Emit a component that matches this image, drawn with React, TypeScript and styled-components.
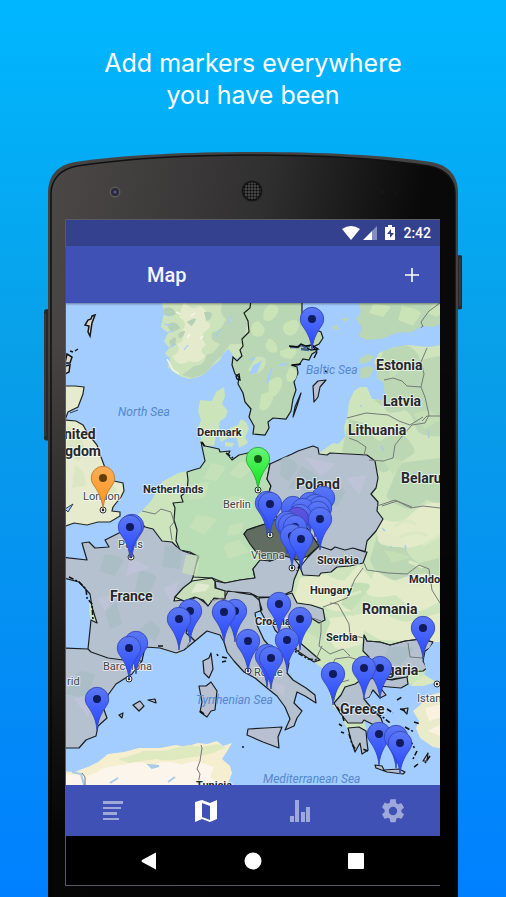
import React from 'react';
import styled, { createGlobalStyle } from 'styled-components';

const GlobalStyle = createGlobalStyle`
  * { box-sizing: border-box; }
  body { margin: 0; background: #0080ff; }
`;

const Page = styled.main`
  min-height: 100vh;
  display: flex;
  flex-direction: column;
  align-items: center;
  overflow: hidden;
  background: linear-gradient(#00b7ff 0%, #089fe8 40%, #0080ff 100%);
`;

const Headline = styled.h1`
  margin: 47px 16px 41px;
  color: #fff;
  font: 400 25px/32px Inter, sans-serif;
  text-align: center;
  max-width: 320px;
`;

const Phone = styled.section`
  position: relative;
  width: calc(100% - 84px);
  max-width: 422px;
  padding: 67px 24px 12px 23px;
`;

const Shell = styled.svg`
  position: absolute;
  inset: 0;
  width: 100%;
  height: 100%;
`;

const Screen = styled.div`
  position: relative;
  display: flex;
  flex-direction: column;
  border: solid #5a5a66;
  border-width: 1px 0 1px 1px;
  background: #000;
  font-family: Roboto, sans-serif;
`;

const StatusBar = styled.div`
  height: 26px;
  padding-right: 9px;
  display: flex;
  align-items: center;
  justify-content: flex-end;
  background: #34418f;
  color: #fff;
`;

const StatusIcons = styled.svg`
  width: 54px;
  height: 16px;
  margin-right: 7px;
`;

const Clock = styled.time`
  font-size: 14px;
  line-height: 20px;
  font-weight: 500;
`;

const AppBar = styled.header`
  position: relative;
  height: 57px;
  padding: 0 16px 0 81px;
  display: flex;
  align-items: center;
  justify-content: space-between;
  background: #3f51b5;
  box-shadow: 0 1px 2px rgba(0, 0, 0, 0.4);
`;

const Title = styled.h2`
  margin: 0;
  color: #f4f5ff;
  font-size: 20px;
  line-height: 24px;
  font-weight: 500;
`;

const IconButton = styled.button`
  display: grid;
  place-items: center;
  width: 24px;
  height: 24px;
  padding: 0;
  border: 0;
  background: none;
  color: #fff;
`;

const MapDrawing = styled.svg`
  display: block;
  width: 100%;
  height: auto;
`;

const TabBar = styled.nav`
  height: 51px;
  display: grid;
  grid-template-columns: repeat(4, 1fr);
  background: #3f51b5;
`;

const Tab = styled.button<{ $active?: boolean }>`
  display: grid;
  place-items: center;
  padding: 0;
  border: 0;
  background: none;
  color: ${(p) => (p.$active ? '#fff' : '#9fa8da')};
`;

const SystemBar = styled.div`
  height: 49px;
  display: flex;
  align-items: center;
  justify-content: space-between;
  padding: 0 72px 0 71px;
`;

const PhoneShell = () => (
  <Shell viewBox="42 152 422 745" preserveAspectRatio="none" aria-hidden="true">
    <defs>
      <linearGradient id="face" x1="0" y1="0" x2="1" y2=".32">
        <stop offset="0" stopColor="#4c4848" />
        <stop offset=".5" stopColor="#302f2f" />
        <stop offset=".85" stopColor="#090909" />
      </linearGradient>
      <linearGradient id="fade" x1="0" y1="0" x2="0" y2="1">
        <stop offset=".25" stopColor="#000" stopOpacity="0" />
        <stop offset=".9" stopColor="#000" stopOpacity=".9" />
      </linearGradient>
      <pattern id="mesh" width="3" height="3" patternUnits="userSpaceOnUse">
        <circle cx="1.5" cy="1.5" r="1.1" fill="#050505" />
      </pattern>
    </defs>
    <path d="M49 309h-3q-2 0-2 3v125q0 3 2 3h3zM457 255h4q1 0 1 2v50q0 2-1 2h-4z" fill="#272727" />
    <path d="M45 313v123M460 258v48" stroke="#484848" />
    <path d="M48 910V193C48 175 58 165 75 162C122 155 186 152 253 152C320 152 384 155 431 162C448 165 458 175 458 193V910Z" fill="#444343" />
    <path d="M51 910V194C51 179 61 169 77 166C123 159 187 155 253 155C319 155 383 159 429 166C445 169 455 179 455 194V910Z" fill="url(#face)" stroke="#111" strokeWidth="1.5" />
    <path d="M48 910V193C48 175 58 165 75 162C122 155 186 152 253 152C320 152 384 155 431 162C448 165 458 175 458 193V910Z" fill="url(#fade)" />
    <circle cx="115" cy="192" r="5.5" fill="#5c5959" />
    <circle cx="115" cy="192" r="4" fill="#2b2a36" />
    <circle cx="115" cy="192" r="1.5" fill="#5555a0" />
    <circle cx="252" cy="191" r="10.5" fill="#171717" />
    <circle cx="252" cy="191" r="8.5" fill="#4c4b4b" />
    <circle cx="252" cy="191" r="9" fill="url(#mesh)" />
    <circle cx="383" cy="192" r="1" fill="#1c1c1c" /><circle cx="396" cy="192" r="1.5" fill="#151515" />
  </Shell>
);

type PinData = { x: number; y: number; c?: 'blue' | 'green' | 'orange' | 'violet'; dot?: boolean };

const pins: PinData[] = [
  { x: 312, y: 349 }, { x: 103, y: 508, c: 'orange' }, { x: 258, y: 489, c: 'green' },
  { x: 132, y: 556, dot: false }, { x: 130, y: 557 },
  { x: 267, y: 533, dot: false }, { x: 270, y: 534 },
  { x: 323, y: 528, dot: false }, { x: 310, y: 534, dot: false }, { x: 315, y: 536, dot: false },
  { x: 320, y: 538, dot: false }, { x: 293, y: 538, dot: false }, { x: 303, y: 540, dot: false },
  { x: 318, y: 543, dot: false }, { x: 300, y: 546, dot: false }, { x: 297, y: 549, c: 'violet', dot: false },
  { x: 287, y: 553, dot: false }, { x: 290, y: 555, dot: false }, { x: 295, y: 557 },
  { x: 320, y: 549 }, { x: 292, y: 566 }, { x: 301, y: 569 },
  { x: 190, y: 641 }, { x: 179, y: 649 }, { x: 235, y: 641 }, { x: 224, y: 642 },
  { x: 279, y: 634 }, { x: 300, y: 649 },
  { x: 136, y: 673, dot: false }, { x: 129, y: 678 }, { x: 97, y: 729 },
  { x: 248, y: 671 }, { x: 287, y: 670 }, { x: 267, y: 686, dot: false }, { x: 271, y: 688 },
  { x: 333, y: 704 }, { x: 380, y: 698 }, { x: 364, y: 698 }, { x: 423, y: 658 },
  { x: 379, y: 764 }, { x: 396, y: 767, dot: false }, { x: 400, y: 773 },
];

const pinStroke = { blue: '#3448b8', green: '#28a53c', orange: '#ba7a35', violet: '#4038ae' };
const pinDot = { blue: '#101b5d', green: '#125d15', orange: '#633d0c', violet: '#101b5d' };

const Pin = ({ x, y, c = 'blue', dot = true }: PinData) => (
  <g transform={`translate(${x} ${y})`}>
    <path d="M0 1C-1-9-4-15-8-21C-10-24-11.7-26-11.7-30A11.7 11.7 0 0 1 11.7-30C11.7-26 10-24 8-21C4-15 1-9 0 1Z" fill={`url(#pin-${c})`} stroke={pinStroke[c]} strokeWidth=".9" />
    {dot && <circle cy="-30" r="4" fill={pinDot[c]} />}
  </g>
);

type LabelData = { t: string; x: number; y: number; s: number; k?: 'city' | 'sea' };

const labels: LabelData[] = [
  { t: 'Estonia', x: 376, y: 370, s: 14 }, { t: 'Latvia', x: 383, y: 406, s: 14 },
  { t: 'Lithuania', x: 348, y: 435, s: 14 }, { t: 'Denmark', x: 197, y: 436, s: 11 },
  { t: 'nited', x: 64, y: 439, s: 14 }, { t: 'gdom', x: 65, y: 456, s: 14 },
  { t: 'Netherlands', x: 143, y: 493, s: 11 }, { t: 'Poland', x: 296, y: 489, s: 14 },
  { t: 'Belaru', x: 401, y: 483, s: 14 }, { t: 'France', x: 110, y: 601, s: 14 },
  { t: 'Slovakia', x: 317, y: 564, s: 11 }, { t: 'Hungary', x: 310, y: 594, s: 11 },
  { t: 'Moldo', x: 409, y: 583, s: 11 }, { t: 'Romania', x: 362, y: 614, s: 14 },
  { t: 'Croatia', x: 255, y: 625, s: 11 }, { t: 'Serbia', x: 326, y: 641, s: 11 },
  { t: 'Bulgaria', x: 366, y: 675, s: 14 }, { t: 'Greece', x: 340, y: 714, s: 14 },
  { t: 'Tunisia', x: 196, y: 789, s: 11 },
  { t: 'London', x: 83, y: 500, s: 11, k: 'city' }, { t: 'Paris', x: 118, y: 548, s: 11, k: 'city' },
  { t: 'Berlin', x: 223, y: 508, s: 11, k: 'city' }, { t: 'Vienna', x: 251, y: 559, s: 11, k: 'city' },
  { t: 'Barcelona', x: 103, y: 670, s: 11, k: 'city' }, { t: 'rid', x: 67, y: 685, s: 11, k: 'city' },
  { t: 'Rome', x: 254, y: 676, s: 11, k: 'city' }, { t: 'Istan', x: 417, y: 702, s: 11, k: 'city' },
  { t: 'North Sea', x: 118, y: 416, s: 12, k: 'sea' }, { t: 'Baltic Sea', x: 306, y: 374, s: 12, k: 'sea' },
  { t: 'Tyrrhenian Sea', x: 196, y: 704, s: 12, k: 'sea' },
  { t: 'Mediterranean Sea', x: 263, y: 783, s: 12, k: 'sea' },
];

const MapLabel = styled.text<{ $kind: 'country' | 'city' | 'sea' }>`
  font-family: Roboto, sans-serif;
  font-weight: ${(p) => (p.$kind === 'country' ? 700 : 400)};
  font-style: ${(p) => (p.$kind === 'sea' ? 'italic' : 'normal')};
  fill: ${(p) => (p.$kind === 'country' ? '#25282b' : p.$kind === 'city' ? '#41464b' : '#5488cc')};
  stroke: ${(p) => (p.$kind === 'sea' ? 'none' : 'rgba(255, 255, 255, 0.65)')};
  stroke-width: 2px;
  stroke-linejoin: round;
  paint-order: stroke;
`;

const cityMarks = [[103, 510], [131, 557], [270, 535], [258, 490], [292, 568], [248, 671], [129, 679], [437, 684]];

const EuropeMap = () => (
  <MapDrawing viewBox="66 303 374 482" role="img" aria-label="Map of Europe with markers">
    <defs>
      <linearGradient id="pin-blue" x1="0" y1="0" x2="0" y2="1"><stop stopColor="#5b78f4" /><stop offset="1" stopColor="#2544ff" /></linearGradient>
      <linearGradient id="pin-green" x1="0" y1="0" x2="0" y2="1"><stop stopColor="#68f577" /><stop offset="1" stopColor="#08e512" /></linearGradient>
      <linearGradient id="pin-orange" x1="0" y1="0" x2="0" y2="1"><stop stopColor="#f9ae57" /><stop offset="1" stopColor="#ff9418" /></linearGradient>
      <linearGradient id="pin-violet" x1="0" y1="0" x2="0" y2="1"><stop stopColor="#5f55dc" /><stop offset="1" stopColor="#3c3ae6" /></linearGradient>
      <clipPath id="mainland-clip"><use href="#mainland" /></clipPath>
      <clipPath id="grey-clip"><use href="#visited" /></clipPath>
    </defs>
    <rect x="60" y="300" width="390" height="490" fill="#a3ccff" />

    {/* Scandinavia */}
    <path d="M161 300L164 312L161 327L168 333L164 341L169 348L165 354L170 358L168 367L175 373L182 377L190 379L198 377L205 374L211 367L219 361L223 354L228 349L232 353L234 361L260 340V300Z" fill="#cde3bc" />
    <path d="M184 300Q190 312 200 306Q213 313 205 321Q215 324 206 331Q199 336 206 345Q197 351 206 356Q198 365 189 361Q179 369 172 356Q182 352 177 344Q187 340 181 331Q190 324 179 317Z" fill="#e4ebcd" />
    <path d="M224 300Q217 312 226 319Q221 332 213 332Q208 340 220 344Q215 354 206 355Q205 366 194 366L182 375L192 378L205 374L214 363L223 354L230 344L243 344L252 300Z" fill="#b9d5b5" />
    <path d="M163 309q9-5 13 5q-8 5-12-1zm4 16q8-6 13 3q-8 6-11 1zm2 17q5-6 7-4q0 8-4 9zm18-20q7-5 9-3q-3 7-5 7zm-9 12q5-4 7-3q-1 7-6 7zm26-22q8-1 8 3q-2 7-6 5z" fill="#b4d0b5" />
    <path d="M162 314l8 2M164 324l8 1M165 333l9-2M168 348l8-4M184 350l4-5M216 337l4-8M228 324l4-9" stroke="#a3ccff" strokeWidth="1.2" />
    <path d="M167 359l6 11 6 4M176 312l4 2M191 316l4-3M187 338l3-4M200 339l3-3" fill="none" stroke="#f5f5ec" strokeWidth="1.5" />
    <path d="M251 300L250 308L244 313L248 321L249 332L242 339L243 346L240 350L242 356L237 361L233 357L232 365L235 374L239 377L238 384L243 393L245 402L251 409L249 417L254 426L253 434L265 435L269 428L268 422L273 418L286 419L291 411L293 399L296 390L294 382L298 373L297 367L291 365L299 365L303 359L309 360L312 354L317 351L313 347L319 344L323 338L321 332L314 329L308 324L302 320V300Z" fill="#b9d6b5" stroke="#191d1a" strokeWidth="1.2" />
    <path d="M270 304q12 1 7 10q-6 10-13 6q-3-10 6-16zm-12 17q11 8 4 15q-10 3-11-6q0-8 7-9zm27 2q13-8 14 3q-3 12-12 9q-7-5-2-12zm-16 15q10 5 8 14q-9 3-12-7zm-13 19q14-2 8 11q-7 10-16 2zm36-10q10 3-1 12q-13-1-11-8zm-23 34q15-10 13 5q-6 14-14 11zm21-14q11 3 5 13q-9 5-9-5zm-29 28q12-8 12 5q-8 16-14 8z" fill="#cae3b7" />
    <path d="M251 373l3-7 6-3-4 9zm16 10l5-15M279 365l8-1M250 360l5-2" stroke="#a3ccff" strokeWidth="2" fill="#a3ccff" />
    <path d="M290 347h8l3-2 4 2 5-1M301 349l8 1" fill="none" stroke="#40618a" strokeWidth="2.5" />
    <path d="M289 346l9 1 3-3 5 2 6-1 6 4-7 1-4-2M317 352l-3 6M292 365l9-1M236 376l3-2 1 6-3-1z" fill="none" stroke="#080a0d" strokeWidth="1.3" />

    {/* British Isles */}
    <path d="M60 386H75L84 387L83 394L78 407L68 412L65 420L76 421L83 425L88 434L97 445L101 457L104 465L108 477L114 481L123 483L124 491L121 497L113 507L112 511L120 512V516L110 522L98 522L87 525L74 523L66 526L60 525Z" fill="#e5ebcc" stroke="#242722" strokeWidth="1.2" />
    <path d="M67 426q18 8 17 28l-6 8-9-11zm8 39q13 8 10 21l-13 2zm36 20q9 3 4 12l-7-3z" fill="#d7e4bd" opacity=".7" />
    <path d="M65 509l8-5-5 8zM70 413l8-3" fill="#a3ccff" stroke="#30404e" />
    <path d="M92 316l3-1-3 8-2 13-2-4 1-6-4-1 3-5 3-1zM67 354l5 3-2 6h-5zM70 351l3 1m2-1l3-2M65 366l5-1-1 7-4 2" fill="#d9d6c7" stroke="#151515" strokeWidth="1.5" />

    {/* Denmark */}
    <path d="M200 445L201 438L198 428L201 420L198 411L200 400L212 401L216 392L224 387L225 396L222 404L228 411L225 418L220 421L219 429L216 436L214 446ZM230 428L238 425L241 419L246 422L249 429L245 437L248 443L239 448L237 438L229 438ZM218 433l7-2 3 7-7 4zM225 442l9 1-2 4-7-1z" fill="#cbe4b9" />

    {/* Mainland */}
    <path id="mainland" d="M201 442L207 445L210 447L219 449L220 452L230 451L228 455L232 460L236 458L239 455L248 453L258 462L270 464L283 458L293 454L298 451L313 446L317 448L319 453L333 443L338 444L345 437L344 426L347 418L349 402L354 391L360 387L367 387L372 399L382 400L385 394L384 383L377 378L378 369L374 362L379 353L391 348L408 345L428 347L450 344V650L433 642L430 648L425 651L423 661L427 668L424 674L434 682L424 686L408 684L401 688L389 687L379 686L386 695L380 698L373 690L370 689L369 697L364 699L373 710L381 718L384 727L376 726L364 720L367 732L368 750L362 754L360 743L355 750L350 741L347 729L340 713L332 705L329 693L330 680L325 670L314 662L302 656L290 646L281 639L275 630L272 623L266 621L261 612L255 613L257 625L264 640L273 650L284 656L289 663L287 673L293 680L306 688L315 695L316 703L305 696L297 692L294 703L302 711L297 718L294 726L285 730L290 719L285 707L277 696L267 688L255 678L244 672L234 661L227 652L224 642L220 635L207 631L195 641L184 650L176 654L160 648L145 647L142 661L132 674L116 684L108 695L103 707L107 717L98 726L96 736L86 740L79 748L60 747V648L88 649L91 620L89 610L90 594L85 589L79 582L60 577V557L87 560L82 543L89 542L95 548L109 547L105 540L121 532L136 517L151 501L162 482L178 473L193 470L200 468L205 460Z" fill="#cde4bd" />
    <g clipPath="url(#mainland-clip)">
      <path d="M385 345q30-5 35 15l20-4v80q-20 2-24-8q-5-16-11-18q-19 6-19-1q-18-12-14-17l5-19zM349 419l18 5q5 15 13 17q18-12 25-5q14 15 8 18l-27 18q-10 2-14-12l-30-8zM400 463l40-5v50q-15-12-15-6q-16 10-23 5q-18-8-15-13zM379 530q20 5 25 13q4 16 15 20l20-5v18q-15 12-21 11q-17-2-27-6q-19-10-21-22z" fill="#b8d5b3" opacity=".85" />
      <path d="M375 515q15 10 30 5q18-20 35-17v34q-30 14-40 10q-18 0-22-6zM300 578l26-4q14 8 19 6l13-15q14 12 13 16l-18 30q-20 2-28-4l-32-5zM375 570q18 12 22 10q24-10 42-4v26q-20 12-26 9q-14-14-18-16q-26 6-29-4zM319 620l31-5q16 6 15 9l-3 20q-22 8-28 3zM354 615l28-3q20 12 27 9l31-8v30l-60-3-20-12z" fill="#e6ebca" opacity=".9" />
      <path d="M343 470l-10 20 25 4zM382 458q22 0 20 5l-9 12zM390 365q12 4 8 8l-9 7zM413 414q20-9 27 6l-15 9zM352 583q20-1 18 4l-18 24q-14-6-10-9zM368 643l20 5-14 10zM320 610q12 10 10 14l-8 17-16-10zM384 550q26 4 25 8l-17 5z" fill="#c4dfb5" />
      <path d="M395 526q12-9 20-2M401 537q12-7 25-2M423 545l17-10M410 562l12 5M347 596l13-4" fill="none" stroke="#dbe8c4" strokeWidth="3" strokeLinecap="round" />
      <path d="M382 528l3 3M390 546l2 2M405 545l1 4M413 474l4-2M428 430l1 8M381 446l3 5M360 406h2M411 606l3 1" stroke="#a9cbe8" strokeWidth="1.5" />
    </g>

    <path d="M60 771L75 772L82 769L88 767L98 762L108 754L124 752L139 748L160 748L176 745L185 747L198 743L207 744L217 741L223 746L232 743L226 753L222 759L230 766L232 773L227 786H60Z" fill="#f6efcf" />
    <path d="M118 759q20-5 25-8q25 0 25-1l20-5 15 2 14-3 9 3-13 6-12 3-15 2q-20 4-30 1-21 3-27 4z" fill="#dfe9bf" />
    <path d="M60 786v-12l23 1q10 2 18-6 15-4 23-4 15-6 28 1 12-8 30-1 10-6 20-2l12 4q-5 10-2 12l12 5 3 6z" fill="#fcf5ec" />
    <path d="M110 783l8-5m31-13l10 1-7 2zm19 17l7-5M72 772l9 2 3 11" stroke="#a9cbe8" strokeWidth="2" fill="none" />
    <path d="M201 745l1 3-2 13-3 8 3 5-2 10M82 773l3 4v9" fill="none" stroke="#777" />

    {/* Visited countries */}
    <g stroke="#191e23" strokeWidth="1.2" strokeLinejoin="round">
      <path d="M201 442L205 446L210 447L219 449L220 452L230 451L228 455L232 460L239 455L248 453L258 461L270 464L267 479L271 486L268 495L274 508L277 519L265 524L247 530L244 534L252 543L260 553L260 561L253 569L255 578L240 580L225 583L212 578L193 577L195 567L199 557L190 552L180 550L176 541L177 530L174 520L175 508L173 503L183 502L181 496L187 491L188 480L187 472L193 470L200 468L205 461Z" fill="#b9ddb4" />
      <path id="visited" d="M270 464L283 458L292 454L298 451L313 446L318 448L319 454L327 455L330 453L367 455L375 461L378 478L376 488L371 494L378 502L377 511L383 519L376 531L367 541L365 552L353 548L345 550L335 547L331 550L319 546L305 525L277 519L268 495L271 486L267 479ZM136 517L145 527L153 529L162 541L172 542L180 550L198 556L193 577L190 585L175 597L174 601L183 600L186 608L181 615L189 623L186 633L195 641L184 650L176 653L160 648L145 647L142 661L123 660L108 658L91 652L88 649L91 620L97 623L92 607L90 594L79 582L60 577V557L87 560L82 543L89 542L95 548L109 547L105 540L121 532ZM60 648L88 649L91 652L108 658L123 660L142 661L132 674L116 684L108 695L103 707L107 718L98 726L96 736L86 740L79 748H60ZM189 620L184 611L188 601L197 597L208 605L214 598L224 599L228 591L253 595L259 600L262 610L255 613L257 625L264 640L273 650L284 656L289 663L287 673L293 680L306 688L315 695L316 703L305 696L297 692L294 703L302 711L297 718L294 726L285 730L290 719L285 707L277 696L267 688L255 678L244 672L234 661L227 652L224 642L220 635L207 631L195 641L189 635ZM225 583L240 580L255 578L253 569L260 560L270 561L281 557L292 556L300 566L297 573L294 580L292 591L279 597L258 597L250 593L237 592L225 591L216 588L215 581ZM319 546L331 550L335 547L345 550L353 548L367 552L363 563L350 566L337 567L331 572L321 573L319 576L303 575L300 567L308 557ZM259 598L279 597L292 593L297 603L311 605L323 609L325 620L319 623L311 618L292 617L287 623L298 641L320 660L314 662L290 646L275 630L272 623L266 621L261 612ZM364 635L367 641L380 642L390 645L405 641L421 639L433 642L430 648L425 651L423 661L427 668L423 671L410 672L407 677L392 679L377 678L370 674L367 665L369 657L363 651ZM345 687L355 684L361 680L377 678L392 680L407 677L408 684L401 688L389 687L379 686L386 695L380 698L373 690L369 697L364 699L373 710L381 718L384 727L376 726L364 720L362 723L348 723L340 713L334 703L341 695ZM348 728L359 727L366 731L367 742L368 750L362 754L360 743L355 752L351 740Z" fill="#b5c1cf" />
      <path d="M203 661L209 658L211 653L213 669L209 678L204 673ZM199 686L206 686L211 682L217 691L215 710L211 711L207 717L200 712L202 702ZM248 729L265 728L282 727L278 737L279 748L263 742L247 735ZM133 705L140 701L144 706L139 711ZM148 700l7-1 1 4zM119 715l4-2-1 5zM375 765l7 1 2 4 15-1 6 3-2 2-16-2-11-4zM313 386L318 381L326 380L320 387L318 397L314 402ZM301 393L297 406L293 417L295 407ZM423 761l5-8-1 8zM402 709l6-1-1 6z" fill="#b8c0d2" />
      <path d="M247 530L265 524L277 519L290 521L305 525L319 546L308 556L298 560L285 556L270 561L257 553L250 544L244 534Z" fill="#626d61" />
      <path d="M192 581L212 578L215 581V588L225 591V599L214 598L208 606L203 600L195 597L184 601L175 597L183 588Z" fill="#c8dfb9" />
    </g>

    {/* Terrain */}
    <g clipPath="url(#grey-clip)">
      <path d="M105 554q20 3 18 8l-9 14-15-5zm34 16q19 4 17 9l-8 16-14 2zm26-25q19 2 17 7l-2 17-18-2zm-60 66q14-11 12-9l5 22-12 5zm45 9q12 8 10 11l-5 10-19-8zm152-154q18 10 16 14l-11 11-19-3zm27 18q18 4 16 8l-7 14-20-4zm-47-30q18 9 16 13l-9 15-9-7zM79 671q18 2 16 5l-9 22-21-4zm309-24q27-1 25 3l-12 15-17-4zM223 611q18 4 16 8l-2 19-14-9z" fill="#a9bdc6" opacity=".8" />
      <path d="M130 557l20 11-24 8zM97 598l21-5-13 18zM163 588l16-7-7 22zM74 699l23-8-9 26zM304 457l32 7-15 12zM346 478l21-3-8 20zM362 684l10 10-7 7zM269 681l17 5-3 11zM238 645l13 8-3 11z" fill="#c0c3d8" opacity=".8" />
    </g>
    <g fill="#cbe3ba" opacity=".7">
      <path d="M211 463q16 2 14 6l-8 12-14-2zm30-2q14 4 12 8l-12 10-12-5zm-49 24q19-5 17-2l-4 15-16 2zm38 11q17 0 15 3l-8 11-15-2zm-33 19q21 2 19 6l-12 14-15-8zm26 31q19-9 17-6l9 12-20 7zm-37 9q16-1 14 3l-3 18-15-3zm43-29q17-6 15-3l-4 11-14 2z" />
      <path d="M197 583l13 2-4 6-15 2z" fill="#eef0dc" />
    </g>

    {/* Unvisited borders */}
    <g fill="none" stroke="#747c77" strokeWidth="1">
      <path d="M142 511l13 3 6-5 10 3 3 10-4 5 2 13M384 380l9-2 9 3 5 5 14 1 3-13-3-12 6-14M347 418l19-5 22 2 11 6 11 4 13-8M421 387l4 10 4 18-4 8-13 2-9 10-8 10-2 13-10 3-14-1M349 438l8 3 9 6-2 8M377 506l18-6 16 8 12-2 17 2M364 563l3 7 21 3 19 1 12-9 10 4 3 21 8 13M363 568l-8 11-8 19-13 5-11 4M330 603l8 1 11 20 1 11 14 3M292 617l15-1 14 5 0 11-2 14 11 8 13-5 7 7M316 659l6-13M330 671l5-12 14-2 12 4 8 0M334 700l4-17 11-3M421 328l19-23M422 421l5-5h13M408 643l2 14 13 1" />
      <path d="M186 648l6-10M210 601l13-3M382 506l15-5 15 6" />
    </g>
    <path d="M364 635l3 6 13 1 10 3 15-4 16-2 12 3" fill="none" stroke="#24292a" strokeWidth="1.2" />

    {/* Finland, islands and Anatolia */}
    <path d="M358 300l3 12-5 7 6 8-3 9 7 4 16-1 14-6 16-1 10-6 11 1 12-5v-22zM359 359l9-5 7 3-6 5-8 2zM360 369l8-3 6 2-4 9-9 2zM330 328l7-3 2 5zM341 319l8-2-3 5z" fill="#b9d6b5" />
    <path d="M373 304q19 1 17 4l-7 9-14-4zm29 2q21 4 19 8l-8 12-15-6zm32-3q13 3 11 6l-8 8-10-4z" fill="#cae3b7" />
    <path d="M423 327l-2-5 8-11 11-8" fill="none" stroke="#717c73" />
    <path d="M413 711L420 705L429 695L445 691V749L433 747L420 738L416 728L419 721Z" fill="#eaebca" />
    <path d="M425 708l18-4v13l-14 4zM428 731l15-8v14z" fill="#faf1df" />
    <path d="M411 685l12 1 7-4 16-1v10l-16 4-10 5-8-6zM434 642h12v39l-12 1-7-8-3-13 3-10z" fill="#a3ccff" />
    <path d="M424 675l13 7-14 4-13 0z" fill="#dae7bf" />

    {/* Rugged coast and islets */}
    <g fill="none" stroke="#101418" strokeWidth="1.6" strokeDasharray="5 2 2 2">
      <path d="M281 640l10 9 17 10 9 1M284 634l6 10 9 7M69 577l10 5 7 7 1 9 5 6 1 16M202 442l3 5M226 453l7 5M337 707l5 7 2 7M349 734l3 10 4 6M368 751l-5-2M387 709l6 4M397 700l5-3M410 740l5 9M417 751l-4 8M300 564l-3 7M400 709l7 2M414 722l6 2M405 727l9 5M384 735l-7 3" />
      <path d="M217 654l1 2M222 657l5 1M222 662l4-1M341 732l3 1M339 724l3 2M377 713l7 5 6 5M242 747l2 0M430 756l-5 7M418 764l-5 4M158 646l6 0M200 711l4 3M325 371l2 1" />
    </g>

    {labels.map(({ t, x, y, s, k = 'country' }) => (
      <MapLabel key={t} x={x} y={y} fontSize={s} $kind={k}>{t}</MapLabel>
    ))}
    {cityMarks.map(([x, y]) => (
      <g key={x}><circle cx={x} cy={y} r="3" fill="#eee" stroke="#333" /><circle cx={x} cy={y} r="1.2" fill="#222" /></g>
    ))}
    {pins.map((p) => <Pin key={`${p.x}-${p.y}`} {...p} />)}
  </MapDrawing>
);

export default function App() {
  return (
    <>
      <GlobalStyle />
      <Page>
        <Headline>Add markers everywhere you have been</Headline>
        <Phone>
          <PhoneShell />
          <Screen>
            <StatusBar>
              <StatusIcons viewBox="0 0 54 16" fill="currentColor" aria-hidden="true">
                <path d="M0 4Q9-2 18 4L9 15ZM30 6v9H21z" />
                <path d="M35 1v14h-5V6z" opacity=".4" />
                <path d="M46 0h4v2h3v13H43V2h3zM49 4l-4 5h3v4l4-5h-3z" fillRule="evenodd" />
              </StatusIcons>
              <Clock>2:42</Clock>
            </StatusBar>
            <AppBar>
              <Title>Map</Title>
              <IconButton type="button" aria-label="Add marker">
                <svg width="16" height="16" viewBox="0 0 16 16" stroke="currentColor" strokeWidth="1.6"><path d="M8 1v14M1 8h14" /></svg>
              </IconButton>
            </AppBar>
            <EuropeMap />
            <TabBar aria-label="Sections">
              <Tab type="button" aria-label="List">
                <svg width="22" height="22" viewBox="0 0 22 22" fill="currentColor"><path d="M1 1h20v3H1zM1 7h18v2H1zM1 12h14v3H1zM1 18h16v2H1z" /></svg>
              </Tab>
              <Tab type="button" aria-label="Map" $active>
                <svg width="24" height="24" viewBox="0 0 24 24" fill="currentColor" fillRule="evenodd"><path d="M1 3l7-2 8 3 7-3v19l-7 3-8-3-7 3zM8 4v14l8 3V7z" /></svg>
              </Tab>
              <Tab type="button" aria-label="Statistics">
                <svg width="22" height="24" viewBox="0 0 22 24" fill="currentColor"><path d="M1 17h4v6H1zM6 1h4v22H6zM12 13h4v10h-4zM17 8h4v15h-4z" /></svg>
              </Tab>
              <Tab type="button" aria-label="Settings">
                <svg width="28" height="28" viewBox="0 0 24 24" fill="currentColor"><path d="M19.14 12.94c.04-.3.06-.61.06-.94s-.02-.64-.07-.94l2.03-1.58a.49.49 0 0 0 .12-.61l-1.92-3.32a.49.49 0 0 0-.59-.22l-2.39.96a7 7 0 0 0-1.62-.94l-.36-2.54A.48.48 0 0 0 13.92 2h-3.84a.48.48 0 0 0-.48.41l-.36 2.54a7 7 0 0 0-1.62.94l-2.39-.96a.48.48 0 0 0-.59.22L2.74 8.47a.48.48 0 0 0 .12.61l2.03 1.98a6 6 0 0 0 0 1.88l-2.03 1.58a.49.49 0 0 0-.12.61l1.92 3.32c.12.22.37.29.59.22l2.39-.96c.5.38 1.03.7 1.62.94l.36 2.54c.05.24.24.41.48.41h3.84c.24 0 .44-.17.48-.41l.36-2.54a7 7 0 0 0 1.62-.94l2.39.96c.22.08.47 0 .59-.22l1.92-3.32a.48.48 0 0 0-.12-.61zM12 15.6A3.6 3.6 0 1 1 12 8.4a3.6 3.6 0 0 1 0 7.2z" /></svg>
              </Tab>
            </TabBar>
            <SystemBar>
              <IconButton type="button" aria-label="Back">
                <svg width="16" height="18" viewBox="0 0 16 18" fill="currentColor"><path d="M15 1v16q0 1-1 0L1 10q-1-1 0-2L14 1q1-1 1 0z" /></svg>
              </IconButton>
              <IconButton type="button" aria-label="Home">
                <svg width="18" height="18" viewBox="0 0 18 18" fill="currentColor"><circle cx="9" cy="9" r="8.5" /></svg>
              </IconButton>
              <IconButton type="button" aria-label="Overview">
                <svg width="16" height="16" viewBox="0 0 16 16" fill="currentColor"><rect width="16" height="16" rx="1" /></svg>
              </IconButton>
            </SystemBar>
          </Screen>
        </Phone>
      </Page>
    </>
  );
}
